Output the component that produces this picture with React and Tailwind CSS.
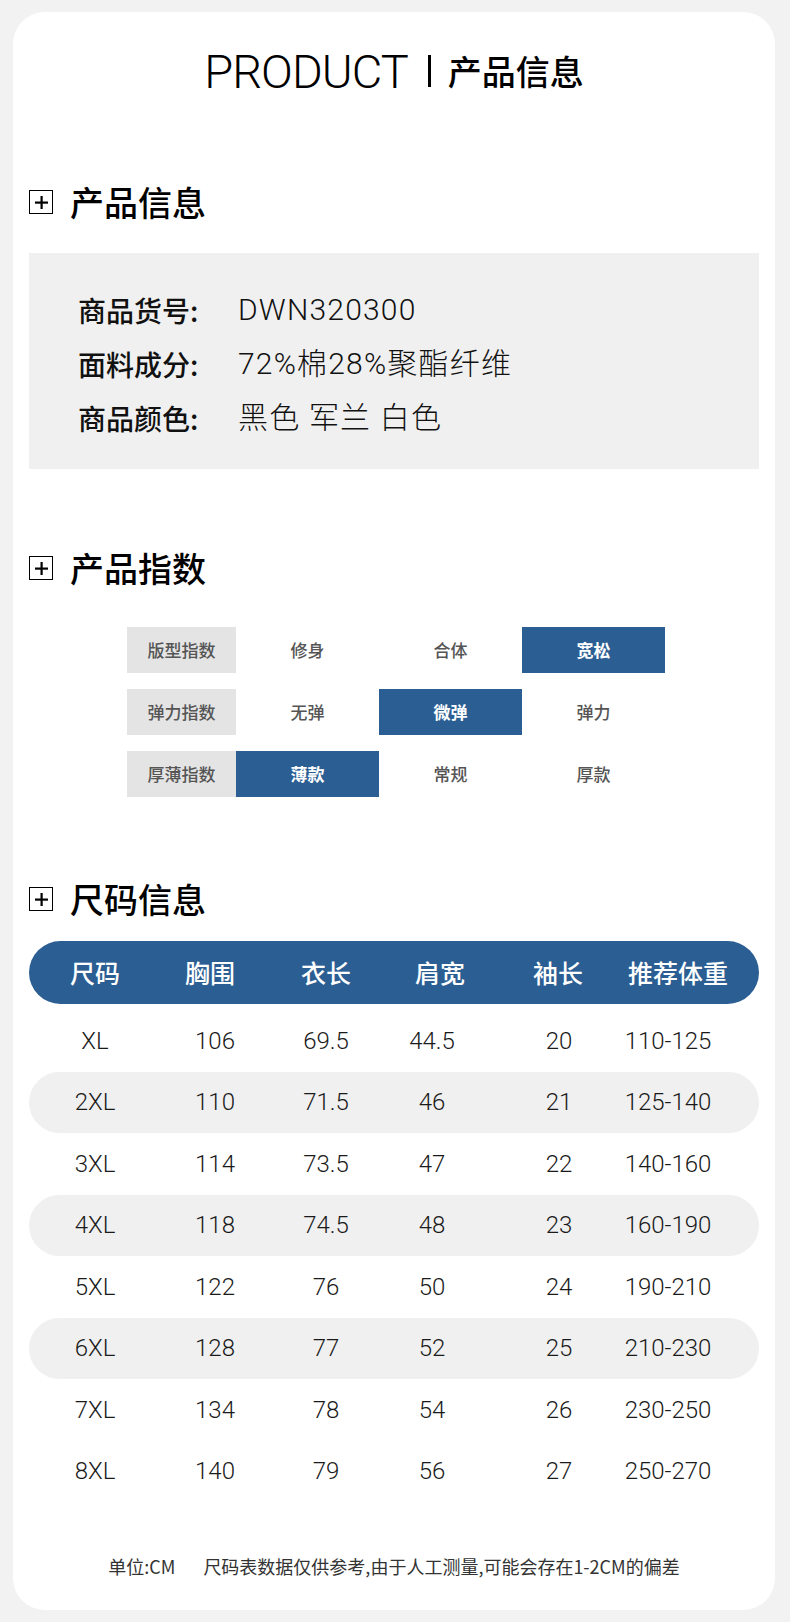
import React from 'react';

const CJK = '"Noto Sans CJK SC", "Noto Sans", sans-serif';
const THIN = 'Roboto, "Noto Sans CJK SC", sans-serif';

const INFO = [
  { label: '商品货号:', value: 'DWN320300' },
  { label: '面料成分:', value: '72%棉28%聚酯纤维' },
  { label: '商品颜色:', value: '黑色 军兰 白色' },
];

const INDEX = [
  { label: '版型指数', opts: ['修身', '合体', '宽松'], active: 2 },
  { label: '弹力指数', opts: ['无弹', '微弹', '弹力'], active: 1 },
  { label: '厚薄指数', opts: ['薄款', '常规', '厚款'], active: 0 },
];

const HEAD = ['尺码', '胸围', '衣长', '肩宽', '袖长', '推荐体重'];

const SIZES = [
  ['XL', '106', '69.5', '44.5', '20', '110-125'],
  ['2XL', '110', '71.5', '46', '21', '125-140'],
  ['3XL', '114', '73.5', '47', '22', '140-160'],
  ['4XL', '118', '74.5', '48', '23', '160-190'],
  ['5XL', '122', '76', '50', '24', '190-210'],
  ['6XL', '128', '77', '52', '25', '210-230'],
  ['7XL', '134', '78', '54', '26', '230-250'],
  ['8XL', '140', '79', '56', '27', '250-270'],
];

// only 2XL / 4XL / 6XL get the grey band
const STRIPED = [1, 3, 5];

const PlusBox = () => (
  <div className="w-[24px] h-[24px] border-[1.5px] border-black flex items-center justify-center shrink-0">
    <svg width="13" height="13" viewBox="0 0 13 13">
      <rect x="5.5" y="0" width="2.2" height="13" fill="#000" />
      <rect x="0" y="5.5" width="13" height="2.2" fill="#000" />
    </svg>
  </div>
);

const SectionTitle = ({ text, className }) => (
  <div className={`h-[48px] flex items-center gap-[17px] ${className}`}>
    <PlusBox />
    <span className="text-[34px] font-medium text-black leading-none" style={{ fontFamily: CJK }}>
      {text}
    </span>
  </div>
);

const App = () => {
  return (
    <div className="min-h-[1622px] bg-[#f2f2f2] pt-[12px] pb-[12px]">
      <div className="mx-[13px] w-[762px] h-[1598px] bg-white rounded-[32px] px-[16px]">
        {/* title */}
        <div className="h-[118px] flex items-center justify-center">
          <span className="text-[47px] font-light text-black leading-none tracking-[-0.02em]" style={{ fontFamily: 'Roboto, sans-serif' }}>
            PRODUCT
          </span>
          <div className="w-[3px] h-[32px] bg-black ml-[20px] mr-[17px]"></div>
          <span className="text-[34px] font-medium text-black leading-none" style={{ fontFamily: CJK }}>
            产品信息
          </span>
        </div>

        <SectionTitle text="产品信息" className="mt-[48px]" />

        <div className="mt-[27px] h-[216px] bg-[#f0f0f0] pt-[30px] pl-[49px]">
          {INFO.map((r) => (
            <div key={r.label} className="h-[54px] flex items-center">
              <span className="w-[160px] text-[28px] font-medium text-[#111] leading-none" style={{ fontFamily: CJK }}>
                {r.label}
              </span>
              <span className="text-[30px] font-light text-[#111] leading-none tracking-[0.04em]" style={{ fontFamily: THIN }}>
                {r.value}
              </span>
            </div>
          ))}
        </div>

        <SectionTitle text="产品指数" className="mt-[75px]" />

        <div className="mt-[35px] ml-[98px] flex flex-col gap-[16px]" style={{ fontFamily: CJK }}>
          {INDEX.map((r) => (
            <div key={r.label} className="grid grid-cols-[109px_143px_143px_143px] h-[46px]">
              <div className="bg-[#e4e4e4] flex items-center justify-center text-[17px] font-medium text-[#555]">
                {r.label}
              </div>
              {r.opts.map((o, i) => (
                <div
                  key={o}
                  className={
                    i === r.active
                      ? 'bg-[#2b5e93] flex items-center justify-center text-[17px] font-bold text-white'
                      : 'flex items-center justify-center text-[17px] font-medium text-[#555]'
                  }
                >
                  {o}
                </div>
              ))}
            </div>
          ))}
        </div>

        <SectionTitle text="尺码信息" className="mt-[78px]" />

        <div className="mt-[18px] h-[63px] bg-[#2b5e93] rounded-full grid grid-cols-[132px_98px_134px_94px_142px_98px] items-center" style={{ fontFamily: CJK }}>
          {HEAD.map((h) => (
            <div key={h} className="flex justify-center text-[25px] font-medium text-white whitespace-nowrap leading-none">
              {h}
            </div>
          ))}
        </div>

        <div className="mt-[6px]" style={{ fontFamily: THIN }}>
          {SIZES.map((row, ri) => (
            <div
              key={row[0]}
              className={`h-[61.5px] rounded-full grid grid-cols-[132px_108px_114px_98px_156px_62px] items-center ${STRIPED.includes(ri) ? 'bg-[#f0f0f0]' : ''}`}
            >
              {row.map((c, ci) => (
                <div key={ci} className="flex justify-center text-[24px] font-light text-[#1a1a1a] whitespace-nowrap leading-none">
                  {c}
                </div>
              ))}
            </div>
          ))}
        </div>

        <div className="mt-[52px] h-[24px] flex items-center justify-center text-[18px] text-[#333] whitespace-nowrap" style={{ fontFamily: CJK }}>
          <span>单位:CM</span>
          <span className="ml-[28px]">尺码表数据仅供参考,由于人工测量,可能会存在1-2CM的偏差</span>
        </div>
      </div>
    </div>
  );
};

export default App;
